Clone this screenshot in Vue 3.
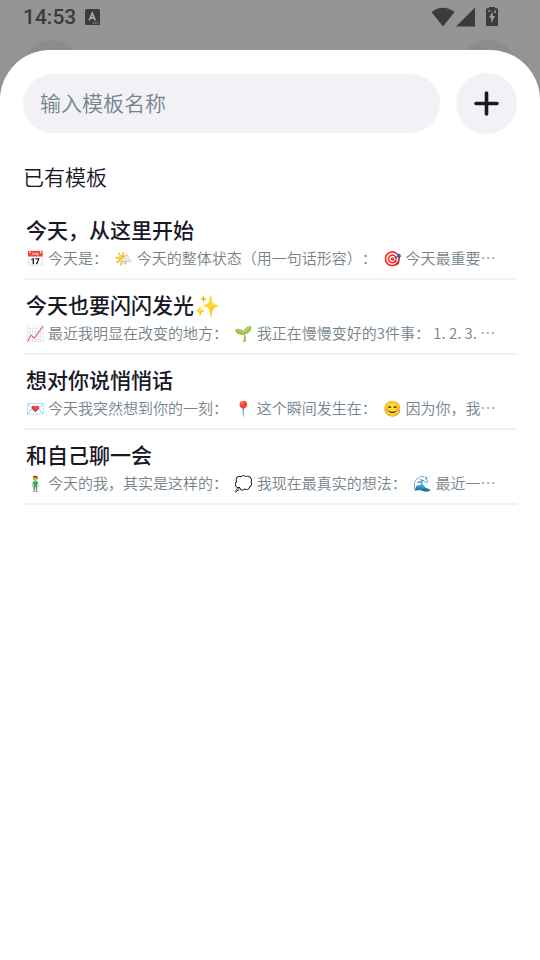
<script setup>
import { ref } from 'vue'

const name = ref('')
const templates = [
  { title: '今天，从这里开始', preview: '📅 今天是：  🌤️ 今天的整体状态（用一句话形容）：  🎯 今天最重要…' },
  { title: '今天也要闪闪发光✨', preview: '📈 最近我明显在改变的地方：  🌱 我正在慢慢变好的3件事： 1. 2. 3. …' },
  { title: '想对你说悄悄话', preview: '💌 今天我突然想到你的一刻：  📍 这个瞬间发生在：  😊 因为你，我…' },
  { title: '和自己聊一会', preview: '🧍‍♂️ 今天的我，其实是这样的：  💭 我现在最真实的想法：  🌊 最近一…' },
]
</script>

<template>
  <div class="screen" lang="zh-CN">
    <header class="status">
      <time class="clock">14:53</time>
      <svg class="ime" viewBox="0 0 15 16" aria-hidden="true">
        <rect width="15" height="16" rx="1.500" fill="#3a3c3b" />
        <path d="M4.2 11.500 7.300 4.300 10.400 11.500M5.300 9h4" fill="none" stroke="#a2a4a5" stroke-width="1.800" />
        <path d="M8 13.300h1.200v1.200H8zM10.200 13.300h1.200v1.200h-1.200zM12.400 13.300h1.200v1.200h-1.200z" fill="#a2a4a5" />
      </svg>
      <div class="signals">
        <svg class="wifi" viewBox="0 0 24 20" aria-hidden="true">
          <path d="M0.500 5Q12-3.500 23.500 5L12 19.500Z" fill="#3a3c3b" />
        </svg>
        <svg class="cell" viewBox="0 0 19 20" aria-hidden="true">
          <path d="M19 .5V19.500H0Z" fill="#3a3c3b" />
        </svg>
        <svg class="battery" viewBox="0 0 12 20" aria-hidden="true">
          <path d="M3 0h6v1.300H11a1 1 0 0 1 1 1V18a1 1 0 0 1-1 1H1a1 1 0 0 1-1-1V2.300a1 1 0 0 1 1-1h2Z" fill="#3a3c3b" />
          <path d="M7 4.500 3 10.500h2.300V16L9 9H6.700Z" fill="#a2a4a5" />
          <path d="M2 3.300h2.500v1.500H2zM8.300 3.300H10V6H8.300z" fill="#8f9192" />
        </svg>
      </div>
    </header>
    <div class="backdrop" aria-hidden="true">
      <span class="ghost"></span>
      <span class="ghost"></span>
    </div>
    <main class="sheet">
      <form class="create" @submit.prevent>
        <input v-model="name" class="field" type="text" placeholder="输入模板名称" aria-label="输入模板名称" />
        <button class="add" type="submit" aria-label="添加">
          <svg viewBox="0 0 25 25" aria-hidden="true">
            <path d="M12.500 2v21M2 12.500h21" stroke="#191827" stroke-width="3.600" stroke-linecap="round" />
          </svg>
        </button>
      </form>
      <h1 class="heading">已有模板</h1>
      <ul class="list">
        <li v-for="item in templates" :key="item.title" class="item">
          <h2 class="title">{{ item.title }}</h2>
          <p class="preview">{{ item.preview }}</p>
        </li>
      </ul>
    </main>
  </div>
</template>

<style>
body {
  margin: 0;
  background: #939495;
}
</style>

<style scoped>
.screen {
  display: flex;
  flex-direction: column;
  min-height: 100vh;
  background: #939495;
  color: #191827;
  font-family: "Noto Sans CJK SC", "Noto Color Emoji", sans-serif;
  font-weight: 350;
  text-spacing-trim: space-all;
}
.status {
  display: flex;
  align-items: center;
  height: 34px;
  padding: 0 42px 0 23px;
}
.clock {
  color: #3a3c3b;
  font: 500 21px/34px Roboto, sans-serif;
}
.ime {
  width: 15px;
  height: 16px;
  margin-left: 9px;
}
.signals {
  display: flex;
  align-items: center;
  margin-left: auto;
}
.wifi {
  width: 24px;
  height: 20px;
}
.cell {
  width: 19px;
  height: 20px;
  margin-left: 1px;
}
.battery {
  width: 12px;
  height: 20px;
  margin-left: 11px;
}
.backdrop {
  display: flex;
  justify-content: space-between;
  height: 16px;
  padding: 6px 23px 0;
  box-sizing: border-box;
}
.ghost {
  width: 58px;
  height: 58px;
  border-radius: 50%;
  background: #8b8c8c;
}
.sheet {
  position: relative;
  flex: 1;
  padding: 23px 23px 0;
  border-radius: 50px 50px 0 0;
  background: #fff;
}
.create {
  display: flex;
  align-items: center;
  gap: 16px;
}
.field {
  flex: 1;
  min-width: 0;
  height: 59px;
  box-sizing: border-box;
  padding: 0 17px 4px;
  border: 0;
  border-radius: 30px;
  outline: none;
  background: #f2f1f6;
  color: #191827;
  font: 350 21px "Noto Sans CJK SC", sans-serif;
}
.field::placeholder {
  color: #76838b;
  opacity: 1;
}
.add {
  display: flex;
  align-items: center;
  justify-content: center;
  width: 61px;
  height: 61px;
  padding: 0;
  border: 0;
  border-radius: 50%;
  background: #f2f1f6;
}
.add svg {
  width: 25px;
  height: 25px;
}
.heading {
  margin: 27px 0 14px;
  font-size: 21px;
  font-weight: 350;
  line-height: 30px;
}
.list {
  margin: 0;
  padding: 0;
  list-style: none;
}
.item {
  padding: 9px 3px 10px;
  border-bottom: 2px solid #eff2f5;
}
.title {
  margin: 0 0 3px;
  font-size: 21px;
  font-weight: 500;
  line-height: 30px;
}
.preview {
  margin: 0;
  overflow: hidden;
  color: #76838b;
  font-size: 15px;
  line-height: 21px;
  text-overflow: ellipsis;
  white-space: pre;
}
</style>
